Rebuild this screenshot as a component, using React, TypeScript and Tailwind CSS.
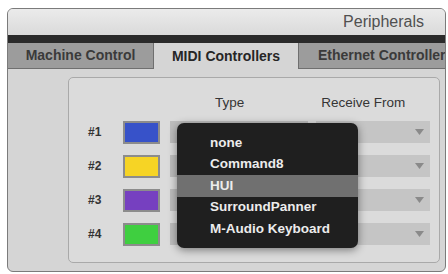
const rows = [
  { id: "#1", color: "bg-[#3752c9]" },
  { id: "#2", color: "bg-[#f6d425]" },
  { id: "#3", color: "bg-[#7640c0]" },
  { id: "#4", color: "bg-[#3fcf40]" },
];

const types = ["none", "Command8", "HUI", "SurroundPanner", "M-Audio Keyboard"];

function Caret() {
  return (
    <svg width="9" height="6" viewBox="0 0 9 6" className="fill-[#8a8a8a]">
      <path d="M0 0h9L4.5 6z" />
    </svg>
  );
}

export default function App() {
  return (
    <div
      className="w-[448px] h-[274px] bg-white pt-[8px] pl-[7px] pr-[2px] overflow-hidden"
      style={{ fontFamily: '"Liberation Sans", Arial, sans-serif' }}
    >
      <div className="h-[264px] flex flex-col border border-[#7b7b7b] rounded-[6px] overflow-hidden bg-[#d5d5d5]">
        {/* title bar */}
        <div className="h-[26px] flex items-center justify-end pr-[21px] bg-gradient-to-b from-[#ebebeb] to-[#dadada] text-[16px] text-[#505050]">
          Peripherals
        </div>
        <div className="h-[8px] bg-[#2a2a2a]" />

        {/* tabs */}
        <div className="h-[26px] flex text-[14px] font-bold">
          <div className="w-[146px] flex items-center justify-center bg-[#9c9c9c] border-b border-r border-[#6f6f6f] text-[#3a3a3a]">
            Machine Control
          </div>
          <div className="w-[144px] flex items-center justify-center bg-[#d5d5d5] text-[#262626]">
            MIDI Controllers
          </div>
          <div className="flex-1 flex items-center pl-[19px] bg-[#9c9c9c] border-b border-l border-[#6f6f6f] text-[#3a3a3a] whitespace-nowrap overflow-hidden">
            Ethernet Controller
          </div>
        </div>

        {/* content */}
        <div className="flex-1 pl-[60px] pr-[5px] pt-[8px] pb-[8px]">
          <div className="relative h-full border border-[#a9a9a9] rounded-[5px] bg-[#dbdbdb] pt-[17px]">
            <div className="flex h-[16px] items-center text-[13.5px] text-[#353535]">
              <span className="ml-[146px]">Type</span>
              <span className="ml-[77px]">Receive From</span>
            </div>

            <div className="mt-[10px] flex flex-col gap-[12px]">
              {rows.map((r) => (
                <div key={r.id} className="flex items-center h-[22px]">
                  <span className="w-[54px] pl-[19px] text-[12px] font-bold text-[#333]">{r.id}</span>
                  <div className={`w-[37px] h-[23px] border-2 border-[#8c8c8c] ${r.color}`} />
                  <div className="ml-[10px] w-[138px] h-[22px] bg-[#bdbdbd]" />
                  <div className="ml-[8px] w-[114px] h-[22px] bg-[#c5c5c5] flex items-center justify-end pr-[6px]">
                    <Caret />
                  </div>
                </div>
              ))}
            </div>

            {/* open Type menu */}
            <div className="absolute left-[108px] top-[45px] w-[181px] h-[125px] rounded-[7px] bg-[#1f1f1f] shadow-[0_2px_8px_rgba(0,0,0,0.45)] pt-[9px] text-[13.5px] font-bold text-[#ececec]">
              {types.map((t) => (
                <div
                  key={t}
                  className={`h-[21.5px] flex items-center pl-[33px] ${t === "HUI" ? "bg-[#707070]" : ""}`}
                >
                  {t}
                </div>
              ))}
            </div>
          </div>
        </div>
      </div>
    </div>
  );
}
